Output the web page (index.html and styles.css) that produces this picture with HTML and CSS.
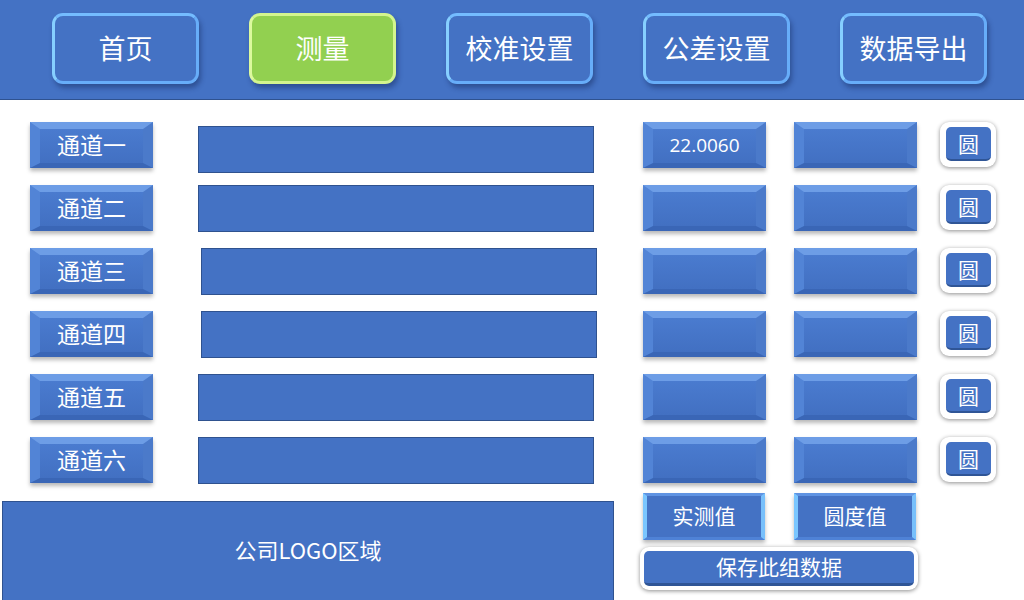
FILE: index.html
```html
<!DOCTYPE html>
<html lang="zh-CN">
<head>
<meta charset="utf-8">
<title>测量</title>
<link rel="stylesheet" href="styles.css">
</head>
<body>
<div class="screen">
  <header class="topbar">
    <nav class="nav">
      <div class="nav-btn">首页</div>
      <div class="nav-btn nav-btn--active">测量</div>
      <div class="nav-btn">校准设置</div>
      <div class="nav-btn">公差设置</div>
      <div class="nav-btn">数据导出</div>
    </nav>
  </header>

  <main class="rows">
    <div class="row">
      <div class="bevel channel">通道一</div>
      <div class="bar bar--low"></div>
      <div class="bevel value value--first">22.0060</div>
      <div class="bevel value value--second"></div>
      <div class="round"><span class="round-inner">圆</span></div>
    </div>
    <div class="row">
      <div class="bevel channel">通道二</div>
      <div class="bar"></div>
      <div class="bevel value value--first"></div>
      <div class="bevel value value--second"></div>
      <div class="round"><span class="round-inner">圆</span></div>
    </div>
    <div class="row">
      <div class="bevel channel">通道三</div>
      <div class="bar bar--shift"></div>
      <div class="bevel value value--first value--after-shift"></div>
      <div class="bevel value value--second"></div>
      <div class="round"><span class="round-inner">圆</span></div>
    </div>
    <div class="row">
      <div class="bevel channel">通道四</div>
      <div class="bar bar--shift"></div>
      <div class="bevel value value--first value--after-shift"></div>
      <div class="bevel value value--second"></div>
      <div class="round"><span class="round-inner">圆</span></div>
    </div>
    <div class="row">
      <div class="bevel channel">通道五</div>
      <div class="bar"></div>
      <div class="bevel value value--first"></div>
      <div class="bevel value value--second"></div>
      <div class="round"><span class="round-inner">圆</span></div>
    </div>
    <div class="row">
      <div class="bevel channel">通道六</div>
      <div class="bar"></div>
      <div class="bevel value value--first"></div>
      <div class="bevel value value--second"></div>
      <div class="round"><span class="round-inner">圆</span></div>
    </div>
  </main>

  <section class="bottom">
    <div class="logo">公司LOGO区域</div>
    <div class="actions">
      <div class="labels">
        <div class="label">实测值</div>
        <div class="label label--second">圆度值</div>
      </div>
      <div class="save"><span class="save-inner">保存此组数据</span></div>
    </div>
  </section>
</div>
</body>
</html>
```

FILE: styles.css
```css
html, body {
  margin: 0;
  padding: 0;
  background: #ffffff;
}

body {
  width: 1024px;
  height: 600px;
  overflow: hidden;
  font-family: "Noto Sans CJK SC", "Noto Sans", sans-serif;
  color: #ffffff;
}

.screen {
  width: 1024px;
  height: 600px;
  overflow: hidden;
}

/* ---------- top navigation ---------- */
.topbar {
  height: 99px;
  background: #4472c4;
  border-bottom: 1px solid #2f528f;
  box-sizing: content-box;
}

.nav {
  display: flex;
  gap: 50px;
  padding: 13px 0 0 52px;
}

.nav-btn {
  box-sizing: border-box;
  width: 147px;
  height: 71px;
  border-radius: 11px;
  border: 3px solid #67adf9;
  border-left-color: #86cfff;
  border-top-color: #74bcff;
  background: #4472c4;
  box-shadow: 2px 4px 5px rgba(20, 40, 90, 0.45);
  display: flex;
  align-items: center;
  justify-content: center;
  padding-bottom: 2px;
  font-size: 27px;
  line-height: 1;
}

.nav-btn--active {
  background: #92d050;
  border-color: #d3f58e;
  border-left-color: #dcf99e;
}

/* ---------- rows ---------- */
.rows {
  display: flex;
  flex-direction: column;
  gap: 17px;
  padding-top: 22px;
}

.row {
  display: flex;
  align-items: flex-start;
  height: 46px;
}

.bevel {
  box-sizing: border-box;
  height: 46px;
  background: linear-gradient(#4a7bcf, #4270c2);
  border-style: solid;
  border-width: 7px 10px 5px 10px;
  border-top-color: #6d9de6;
  border-left-color: #5284d6;
  border-right-color: #4b7aca;
  border-bottom-color: #3a66b6;
  box-shadow: 0 3px 4px rgba(0, 0, 0, 0.28);
  display: flex;
  align-items: center;
  justify-content: center;
  line-height: 1;
}

.channel {
  width: 123px;
  margin-left: 30px;
  font-size: 23px;
  padding-bottom: 4px;
}

.bar {
  box-sizing: border-box;
  width: 396px;
  height: 47px;
  margin-left: 45px;
  background: #4472c4;
  border: 1px solid #2f528f;
}

.bar--low {
  margin-top: 4px;
}

.bar--shift {
  margin-left: 48px;
}

.value {
  width: 123px;
  font-family: "Open Sans", "Noto Sans", sans-serif;
  font-size: 19px;
  padding-bottom: 2px;
}

.value--first {
  margin-left: 49px;
}

.value--after-shift {
  margin-left: 46px;
}

.value--second {
  margin-left: 28px;
}

.round {
  box-sizing: border-box;
  width: 56px;
  height: 45px;
  margin-left: 23px;
  padding: 5px 5px 6px 6px;
  background: #ffffff;
  border-radius: 9px;
  box-shadow: 0 1px 4px rgba(0, 0, 0, 0.45);
  display: flex;
}

.round-inner {
  flex: 1;
  background: #4472c4;
  border-radius: 5px;
  border-bottom: 2px solid #2f5596;
  display: flex;
  align-items: center;
  justify-content: center;
  font-size: 21px;
  line-height: 1;
}

/* ---------- bottom area ---------- */
.bottom {
  display: flex;
  align-items: flex-start;
}

.logo {
  box-sizing: border-box;
  width: 612px;
  height: 120px;
  margin: 18px 0 0 2px;
  background: #4472c4;
  border: 1px solid #2f528f;
  display: flex;
  justify-content: center;
  padding-top: 36px;
  font-size: 22px;
  line-height: 1;
}

.actions {
  display: flex;
  flex-direction: column;
  margin-left: 26px;
  padding-top: 10px;
  gap: 7px;
}

.labels {
  display: flex;
  gap: 29px;
  padding-left: 3px;
}

.label {
  box-sizing: border-box;
  width: 122px;
  height: 47px;
  background: #4472c4;
  border-style: solid;
  border-width: 3px 4px 3px 4px;
  border-color: #5f93e2 #78c0fb #4f82d6 #7ac6ff;
  box-shadow: 0 3px 4px rgba(0, 0, 0, 0.28);
  display: flex;
  align-items: center;
  justify-content: center;
  padding-bottom: 2px;
  font-size: 21px;
  line-height: 1;
}

.save {
  box-sizing: border-box;
  width: 278px;
  height: 43px;
  padding: 4px;
  background: #ffffff;
  border-radius: 9px;
  box-shadow: 0 1px 4px rgba(0, 0, 0, 0.45);
  display: flex;
}

.save-inner {
  flex: 1;
  background: #4472c4;
  border-radius: 5px;
  border-bottom: 3px solid #2f5596;
  display: flex;
  align-items: center;
  justify-content: center;
  padding-bottom: 2px;
  font-size: 21px;
  line-height: 1;
}
```
